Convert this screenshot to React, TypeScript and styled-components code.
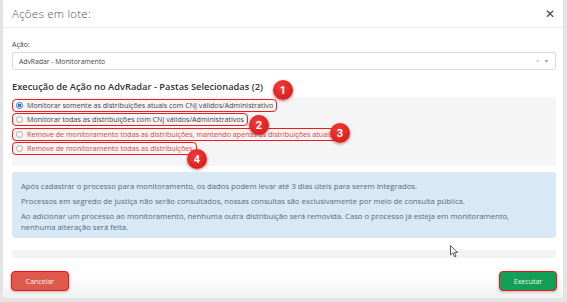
import React from "react";
import styled, { createGlobalStyle } from "styled-components";

const GlobalStyle = createGlobalStyle`
  html, body {
    margin: 0;
    padding: 0;
    background: #e4e4e4;
  }
  body {
    font-family: "Open Sans", "Liberation Sans", sans-serif;
    -webkit-font-smoothing: antialiased;
  }
`;

const Page = styled.div`
  width: 567px;
  height: 302px;
  overflow: hidden;
`;

const Modal = styled.div`
  position: relative;
  width: 560px;
  height: 298px;
  margin-left: 3px;
  background: #fff;
  border-radius: 0 0 4px 4px;
  display: flex;
  flex-direction: column;
`;

const Header = styled.div`
  height: 27px;
  display: flex;
  align-items: center;
  justify-content: space-between;
  padding: 0 8px 0 9px;
  border-bottom: 1px solid #e9e9e9;
`;

const Title = styled.h4`
  margin: 0;
  font-size: 11.6px;
  font-weight: 300;
  color: #555;
  letter-spacing: 0.2px;
`;

const Close = styled.span`
  font-size: 12px;
  color: #444;
  line-height: 1;
`;

const Body = styled.div`
  padding: 12px 7px 0 9px;
  display: flex;
  flex-direction: column;
`;

const Label = styled.label`
  font-size: 7px;
  color: #444;
  line-height: 10px;
  margin-bottom: 2px;
`;

const Select = styled.div`
  height: 16px;
  border: 1px solid #ddd;
  border-radius: 2px;
  display: flex;
  align-items: center;
  justify-content: space-between;
  padding: 0 5px 0 6px;
  font-size: 6.8px;
  color: #444;
`;

const SelectIcons = styled.span`
  font-size: 6px;
  color: #999;
  letter-spacing: 2px;
`;

const SectionTitle = styled.h5`
  margin: 10px 0 4px 0;
  font-size: 9.3px;
  font-weight: 600;
  color: #333;
  line-height: 13px;
`;

const OptionsPanel = styled.div`
  position: relative;
  background: #f5f5f5;
  border-radius: 3px;
  height: 69px;
  box-sizing: border-box;
  padding: 2px 0 0 0;
  display: flex;
  flex-direction: column;
  align-items: flex-start;
  gap: 1.4px;
`;

const Option = styled.label<{ $danger?: boolean }>`
  display: inline-flex;
  align-items: center;
  gap: 4px;
  height: 11px;
  line-height: 11px;
  padding: 0 3px 0 3px;
  border: 1.5px solid #f01c1c;
  border-radius: 4px;
  font-size: 7.15px;
  color: ${(p) => (p.$danger ? "#e0413a" : "#444")};
  white-space: nowrap;
`;

const Radio = styled.span<{ $checked?: boolean }>`
  width: 5px;
  height: 5px;
  border-radius: 50%;
  border: 1px solid ${(p) => (p.$checked ? "#2a6fdb" : "#aaa")};
  background: ${(p) => (p.$checked ? "radial-gradient(circle, #2a6fdb 45%, #fff 55%)" : "#fff")};
  flex: none;
`;

const Badge = styled.span`
  position: absolute;
  width: 20px;
  height: 20px;
  border-radius: 50%;
  background: radial-gradient(circle at 40% 35%, #f23a3a, #d41414);
  box-shadow: 0 1px 3px rgba(120, 0, 0, 0.5);
  color: #fff;
  font-family: "Roboto", "Liberation Sans", sans-serif;
  font-weight: 700;
  font-size: 11px;
  display: flex;
  align-items: center;
  justify-content: center;
  transform: translate(-50%, -50%);
`;

const Info = styled.div`
  margin-top: 6px;
  background: #d8e9f5;
  border-radius: 3px;
  height: 66px;
  box-sizing: border-box;
  padding: 9px 20px 9px 9px;
  color: #4f6b80;
  font-size: 7.7px;
`;

const InfoLine = styled.p`
  margin: 0 0 4px 0;
  line-height: 11px;
  &:last-child {
    margin: 0;
  }
`;

const Bar = styled.div`
  margin-top: 12px;
  height: 8px;
  background: #f3f3f3;
  border-radius: 2px;
`;

const Footer = styled.div`
  margin-top: auto;
  height: 38px;
  box-sizing: border-box;
  display: flex;
  align-items: center;
  justify-content: space-between;
  padding: 4px 6px 0 8px;
  background: linear-gradient(#fff 40%, #f1f1f1);
  border-radius: 0 0 4px 4px;
`;

const Button = styled.button<{ $tone: "red" | "green" }>`
  height: 20px;
  min-width: 58px;
  padding: 0 8px;
  border: 1.5px solid #ff1010;
  border-radius: 4px;
  background: ${(p) => (p.$tone === "red" ? "#e05a4c" : "#139f55")};
  color: #f3f3f3;
  font-family: "Open Sans", "Liberation Sans", sans-serif;
  font-size: 7px;
  box-shadow: 0 1px 3px rgba(0, 0, 0, 0.25);
`;

const Cursor = styled.svg`
  position: absolute;
  left: 447px;
  top: 245px;
`;

const options = [
  { text: "Monitorar somente as distribuições atuais com CNJ válidos/Administrativo", checked: true },
  { text: "Monitorar todas as distribuições com CNJ válidos/Administrativos" },
  { text: "Remove de monitoramento todas as distribuições, mantendo apenas as distribuições atuais.", danger: true },
  { text: "Remove de monitoramento todas as distribuições", danger: true },
];

const badges = [
  { n: 1, x: 271, y: -7 },
  { n: 2, x: 247, y: 28 },
  { n: 3, x: 328, y: 36 },
  { n: 4, x: 185, y: 62 },
];

export default function App() {
  return (
    <Page>
      <GlobalStyle />
      <Modal>
        <Header>
          <Title>Ações em lote:</Title>
          <Close>✕</Close>
        </Header>
        <Body>
          <Label>Ação:</Label>
          <Select>
            <span>AdvRadar - Monitoramento</span>
            <SelectIcons>× ▾</SelectIcons>
          </Select>
          <SectionTitle>Execução de Ação no AdvRadar - Pastas Selecionadas (2)</SectionTitle>
          <OptionsPanel>
            {options.map((o) => (
              <Option key={o.text} $danger={o.danger}>
                <Radio $checked={o.checked} />
                {o.text}
              </Option>
            ))}
            {badges.map((b) => (
              <Badge key={b.n} style={{ left: b.x, top: b.y }}>
                {b.n}
              </Badge>
            ))}
          </OptionsPanel>
          <Info>
            <InfoLine>
              Após cadastrar o processo para monitoramento, os dados podem levar até 3 dias úteis para serem integrados.
            </InfoLine>
            <InfoLine>
              Processos em segredo de justiça não serão consultados, nossas consultas são exclusivamente por meio de consulta pública.
            </InfoLine>
            <InfoLine>
              Ao adicionar um processo ao monitoramento, nenhuma outra distribuição será removida. Caso o processo já esteja em monitoramento, nenhuma alteração será feita.
            </InfoLine>
          </Info>
          <Bar />
        </Body>
        <Footer>
          <Button $tone="red">Cancelar</Button>
          <Button $tone="green">Executar</Button>
        </Footer>
        <Cursor width="9" height="13" viewBox="0 0 9 13">
          <path d="M0.5 0.5 L0.5 10 L2.8 7.8 L4.5 11.8 L6 11.2 L4.4 7.4 L7.6 7.4 Z" fill="#fff" stroke="#333" strokeWidth="0.8" />
        </Cursor>
      </Modal>
    </Page>
  );
}
